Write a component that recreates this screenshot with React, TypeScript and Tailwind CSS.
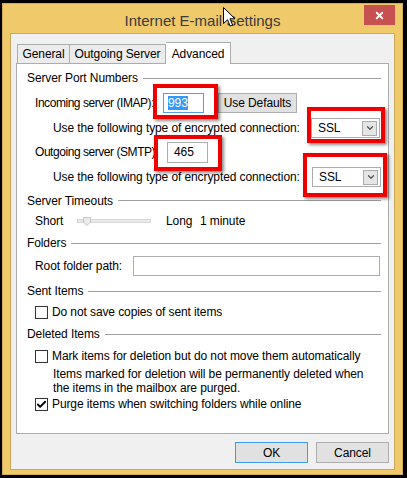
import { Check, ChevronDown, X } from 'lucide-react';

const font = { fontFamily: '"Liberation Sans", Arial, sans-serif' };

function GroupHeading({ title }: { title: string }) {
  return (
    <div className="flex items-center gap-[5px] h-full">
      <span>{title}</span>
      <div className="flex-1 h-px bg-[#a0a0a0]" />
    </div>
  );
}

function Checkbox({ checked }: { checked?: boolean }) {
  return (
    <div className="w-[13px] h-[13px] shrink-0 border border-[#333] bg-white flex items-center justify-center">
      {checked && <Check className="w-[11px] h-[11px]" strokeWidth={4} />}
    </div>
  );
}

function SslSelect() {
  return (
    <div className="w-[69px] h-[20px] border border-[#ababab] bg-white flex items-center pl-[6px] pr-[2px]">
      <span className="flex-1">SSL</span>
      <div className="w-[15px] h-[15px] bg-[#e5e5e5] border border-[#acacac] flex items-center justify-center">
        <ChevronDown className="w-[10px] h-[10px] text-[#555]" strokeWidth={3} />
      </div>
    </div>
  );
}

// red callout boxes drawn on top of the dialog
const callouts = [
  'left-[153px] top-[84px] w-[65px] h-[35px]',
  'left-[307px] top-[107px] w-[78px] h-[36px]',
  'left-[154px] top-[135px] w-[68px] h-[36px]',
  'left-[303px] top-[153px] w-[84px] h-[44px]',
];

export default function App() {
  return (
    <div
      className="relative w-[407px] h-[478px] bg-black pt-[3px] pl-[2px] pr-[4px] pb-[3px] text-[12px] tracking-[-0.1px] text-black whitespace-nowrap"
      style={font}
    >
      <div className="w-full h-full bg-[#f0c96b] border border-[#d2ae5a] flex flex-col px-[7px] pb-[4px]">
        {/* title bar */}
        <div className="h-[29px] grid grid-cols-[1fr_auto_1fr] items-start">
          <div />
          <div className="pt-[6px] text-[15px] tracking-normal text-[#3a3a3a]">Internet E-mail Settings</div>
          <div className="justify-self-end pt-[1px]">
            <div className="w-[31px] h-[20px] bg-[#c75050] flex items-center justify-center">
              <X className="w-[11px] h-[11px] text-white" strokeWidth={4} />
            </div>
          </div>
        </div>

        {/* dialog body */}
        <div className="flex-1 bg-[#f0f0f0] border border-[#c9a858] px-[5px] pt-[8px] flex flex-col">
          {/* tabs */}
          <div className="flex items-end h-[21px] pl-[1px] relative z-10">
            <div className="w-[53px] h-[19px] border border-[#acacac] border-b-0 bg-[#ececec] flex items-center justify-center">General</div>
            <div className="w-[96px] h-[19px] border border-[#acacac] border-l-0 border-b-0 bg-[#ececec] flex items-center justify-center">Outgoing Server</div>
            <div className="w-[65px] h-[22px] -mb-px border border-[#acacac] border-l-0 border-b-0 bg-white flex items-center justify-center">Advanced</div>
          </div>

          {/* tab panel */}
          <div className="h-[371px] bg-white border border-[#acacac] pl-[10px] pr-[7px] pt-[2px] flex flex-col">
            <div className="h-[24px]"><GroupHeading title="Server Port Numbers" /></div>

            <div className="h-[26px] flex items-center pl-[8px]">
              <span className="w-[128px] tracking-[-0.45px]">Incoming server (IMAP):</span>
              <div className="w-[41px] h-[20px] border border-[#569de5] bg-white flex items-center pl-[4px]">
                <span className="bg-[#3399ff] text-white leading-[14px]">993</span>
              </div>
              <div className="ml-[14px] w-[79px] h-[20px] bg-[#e1e1e1] border border-[#adadad] flex items-center justify-center">
                Use Defaults
              </div>
            </div>

            <div className="h-[24px] flex items-center pl-[26px]">
              <span className="w-[258px]">Use the following type of encrypted connection:</span>
              <SslSelect />
            </div>

            <div className="h-[24px] flex items-center pl-[8px]">
              <span className="w-[132px] tracking-[-0.45px]">Outgoing server (SMTP)</span>
              <div className="w-[41px] h-[21px] border border-[#abadb3] bg-white flex items-center pl-[6px]">465</div>
            </div>

            <div className="h-[26px] flex items-center pl-[26px]">
              <span className="w-[259px]">Use the following type of encrypted connection:</span>
              <SslSelect />
            </div>

            <div className="h-[21px]"><GroupHeading title="Server Timeouts" /></div>

            <div className="h-[20px] flex items-center pl-[8px]">
              <span className="w-[42px]">Short</span>
              <div className="relative w-[74px] h-[4px] bg-[#e7eaea] border border-[#d6d6d6]">
                <svg className="absolute left-[5px] -top-[3px]" width="8" height="9" viewBox="0 0 8 9">
                  <path d="M0.5 0.5 H7.5 V5 L4 8.5 L0.5 5 Z" fill="#ececec" stroke="#c6c6c6" />
                </svg>
              </div>
              <span className="ml-[15px] w-[34px]">Long</span>
              <span>1 minute</span>
            </div>

            <div className="h-[24px]"><GroupHeading title="Folders" /></div>

            <div className="h-[21px] flex items-center pl-[8px]">
              <span className="w-[98px]">Root folder path:</span>
              <div className="w-[247px] h-[20px] border border-[#abadb3] bg-white" />
            </div>

            <div className="h-[30px]"><GroupHeading title="Sent Items" /></div>

            <div className="h-[12px] flex items-center pl-[8px] gap-[4px]">
              <Checkbox />
              <span>Do not save copies of sent items</span>
            </div>

            <div className="h-[32px]"><GroupHeading title="Deleted Items" /></div>

            <div className="h-[12px] flex items-center pl-[8px] gap-[4px]">
              <Checkbox />
              <span>Mark items for deletion but do not move them automatically</span>
            </div>

            <div className="mt-[5px] pl-[26px] leading-[14px]">
              <div>Items marked for deletion will be permanently deleted when</div>
              <div>the items in the mailbox are purged.</div>
            </div>

            <div className="h-[18px] flex items-center pl-[8px] gap-[4px]">
              <Checkbox checked />
              <span>Purge items when switching folders while online</span>
            </div>
          </div>

          {/* dialog buttons */}
          <div className="mt-[8px] flex justify-end gap-[8px]">
            <div className="w-[73px] h-[21px] bg-[#e1e1e1] border border-[#3c9af0] flex items-center justify-center">OK</div>
            <div className="w-[73px] h-[21px] bg-[#e1e1e1] border border-[#adadad] flex items-center justify-center">Cancel</div>
          </div>
        </div>
      </div>

      {callouts.map((c) => (
        <div
          key={c}
          className={`absolute border-[4px] border-[#ee0000] shadow-[2px_2px_3px_rgba(0,0,0,0.45)] ${c}`}
        />
      ))}

      {/* mouse pointer */}
      <svg className="absolute left-[223px] top-[7px]" width="13" height="20" viewBox="0 0 13 20">
        <path
          d="M0.5 0.5 V16.5 L4.5 12.8 L7.2 19 L9.6 18 L7 11.8 L12 11.8 Z"
          fill="white"
          stroke="black"
          strokeWidth="1"
          strokeLinejoin="round"
        />
      </svg>
    </div>
  );
}
